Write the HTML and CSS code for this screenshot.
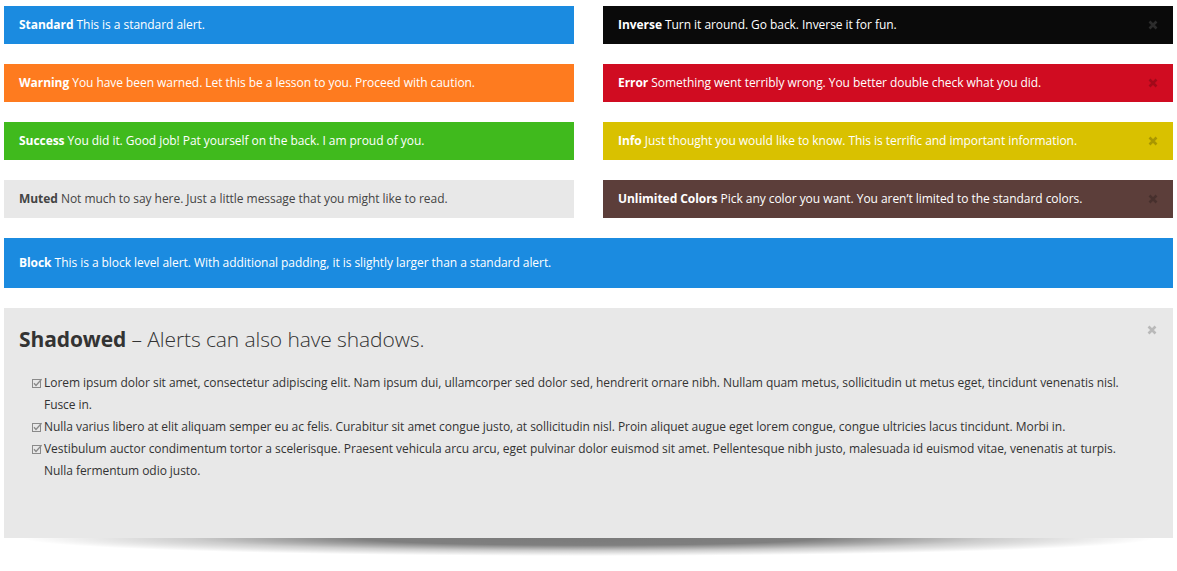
FILE: index.html
```html
<!DOCTYPE html>
<html>
<head>
<meta charset="utf-8">
<link rel="stylesheet" href="styles.css">
</head>
<body>
<div class="page">
  <div class="grid">
    <div class="alert blue"><strong>Standard</strong> This is a standard alert.</div>
    <div class="alert inverse"><strong>Inverse</strong> Turn it around. Go back. Inverse it for fun.<svg class="close" viewBox="0 0 10 10"><path d="M1.5 1.5 L8.5 8.5 M8.5 1.5 L1.5 8.5"/></svg></div>
    <div class="alert orange"><strong>Warning</strong> You have been warned. Let this be a lesson to you. Proceed with caution.</div>
    <div class="alert red"><strong>Error</strong> Something went terribly wrong. You better double check what you did.<svg class="close" viewBox="0 0 10 10"><path d="M1.5 1.5 L8.5 8.5 M8.5 1.5 L1.5 8.5"/></svg></div>
    <div class="alert green"><strong>Success</strong> You did it. Good job! Pat yourself on the back. I am proud of you.</div>
    <div class="alert yellow"><strong>Info</strong> Just thought you would like to know. This is terrific and important information.<svg class="close" viewBox="0 0 10 10"><path d="M1.5 1.5 L8.5 8.5 M8.5 1.5 L1.5 8.5"/></svg></div>
    <div class="alert muted"><strong>Muted</strong> Not much to say here. Just a little message that you might like to read.</div>
    <div class="alert brown"><strong>Unlimited Colors</strong> Pick any color you want. You aren’t limited to the standard colors.<svg class="close" viewBox="0 0 10 10"><path d="M1.5 1.5 L8.5 8.5 M8.5 1.5 L1.5 8.5"/></svg></div>
  </div>
  <div class="alert blue block"><strong>Block</strong> This is a block level alert. With additional padding, it is slightly larger than a standard alert.</div>
  <div class="alert muted shadowed">
    <svg class="close" viewBox="0 0 10 10"><path d="M1.5 1.5 L8.5 8.5 M8.5 1.5 L1.5 8.5"/></svg>
    <h2 class="title"><strong>Shadowed</strong> – Alerts can also have shadows.</h2>
    <ul class="list">
      <li><svg class="check" viewBox="0 0 10 10"><rect x="0.5" y="1.5" width="8" height="8" fill="none" stroke="#8a8a8a" stroke-width="1"/><path d="M2 5.2 L4 7.4 L9.6 1.2" fill="none" stroke="#8a8a8a" stroke-width="1.4"/></svg>Lorem ipsum dolor sit amet, consectetur adipiscing elit. Nam ipsum dui, ullamcorper sed dolor sed, hendrerit ornare nibh. Nullam quam metus, sollicitudin ut metus eget, tincidunt venenatis nisl. Fusce in.</li>
      <li><svg class="check" viewBox="0 0 10 10"><rect x="0.5" y="1.5" width="8" height="8" fill="none" stroke="#8a8a8a" stroke-width="1"/><path d="M2 5.2 L4 7.4 L9.6 1.2" fill="none" stroke="#8a8a8a" stroke-width="1.4"/></svg>Nulla varius libero at elit aliquam semper eu ac felis. Curabitur sit amet congue justo, at sollicitudin nisl. Proin aliquet augue eget lorem congue, congue ultricies lacus tincidunt. Morbi in.</li>
      <li><svg class="check" viewBox="0 0 10 10"><rect x="0.5" y="1.5" width="8" height="8" fill="none" stroke="#8a8a8a" stroke-width="1"/><path d="M2 5.2 L4 7.4 L9.6 1.2" fill="none" stroke="#8a8a8a" stroke-width="1.4"/></svg>Vestibulum auctor condimentum tortor a scelerisque. Praesent vehicula arcu arcu, eget pulvinar dolor euismod sit amet. Pellentesque nibh justo, malesuada id euismod vitae, venenatis at turpis. Nulla fermentum odio justo.</li>
    </ul>
  </div>
</div>
</body>
</html>
```

FILE: styles.css
```css
* { box-sizing: border-box; }
html { background: #fff; }
html, body { margin: 0; padding: 0; }
body {
  font-family: "Open Sans", "Noto Sans", sans-serif;
  font-size: 12px;
  color: #fff;
}
.page {
  width: 1177px;
  padding: 6px 4px 33px 4px;
}
.grid {
  display: grid;
  grid-template-columns: 570px 570px;
  column-gap: 29px;
  row-gap: 20px;
  margin-bottom: 20px;
}
.alert {
  position: relative;
  height: 38px;
  padding: 10px 15px;
  line-height: 18px;
  letter-spacing: -0.05px;
}
.alert strong { font-weight: 700; }
.blue { background: #1b8be0; }
.orange { background: #fe7b1f; }
.green { background: #40ba1d; }
.muted { background: #e8e8e8; color: #444; }
.inverse { background: #0a0a0a; }
.red { background: #d00c21; }
.yellow { background: #d9c100; }
.brown { background: #5c3e3a; }
.close {
  position: absolute;
  right: 15px;
  top: 14px;
  width: 10px;
  height: 10px;
  fill: none;
  stroke: rgba(0,0,0,0.22);
  stroke-width: 2.6;
}
.inverse .close { stroke: rgba(255,255,255,0.14); }
.block {
  height: 50px;
  padding: 16px 15px;
  margin-bottom: 20px;
}
.shadowed {
  height: 230px;
  padding: 17px 15px;
  color: #333;
}
.shadowed::after {
  content: "";
  position: absolute;
  left: 1.5%;
  right: 1.5%;
  top: 100%;
  height: 20px;
  background: radial-gradient(ellipse 50% 18px at 50% 0, rgba(0,0,0,0.52) 0%, rgba(0,0,0,0.5) 40%, rgba(0,0,0,0.2) 70%, rgba(0,0,0,0) 100%);
}
.shadowed .close { top: 17px; right: 16px; stroke: rgba(0,0,0,0.2); }
.title {
  margin: 0;
  font-size: 21px;
  line-height: 28px;
  font-weight: 300;
  color: #333;
  letter-spacing: -0.1px;
}
.title strong { font-weight: 700; }
.list {
  list-style: none;
  margin: 19px 0 0 0;
  padding: 0 30px 0 13px;
  font-size: 12px;
  line-height: 22px;
  color: #333;
}
.list li {
  position: relative;
  padding-left: 12px;
}
.check {
  position: absolute;
  left: 0;
  top: 6px;
  width: 10px;
  height: 10px;
}
```
